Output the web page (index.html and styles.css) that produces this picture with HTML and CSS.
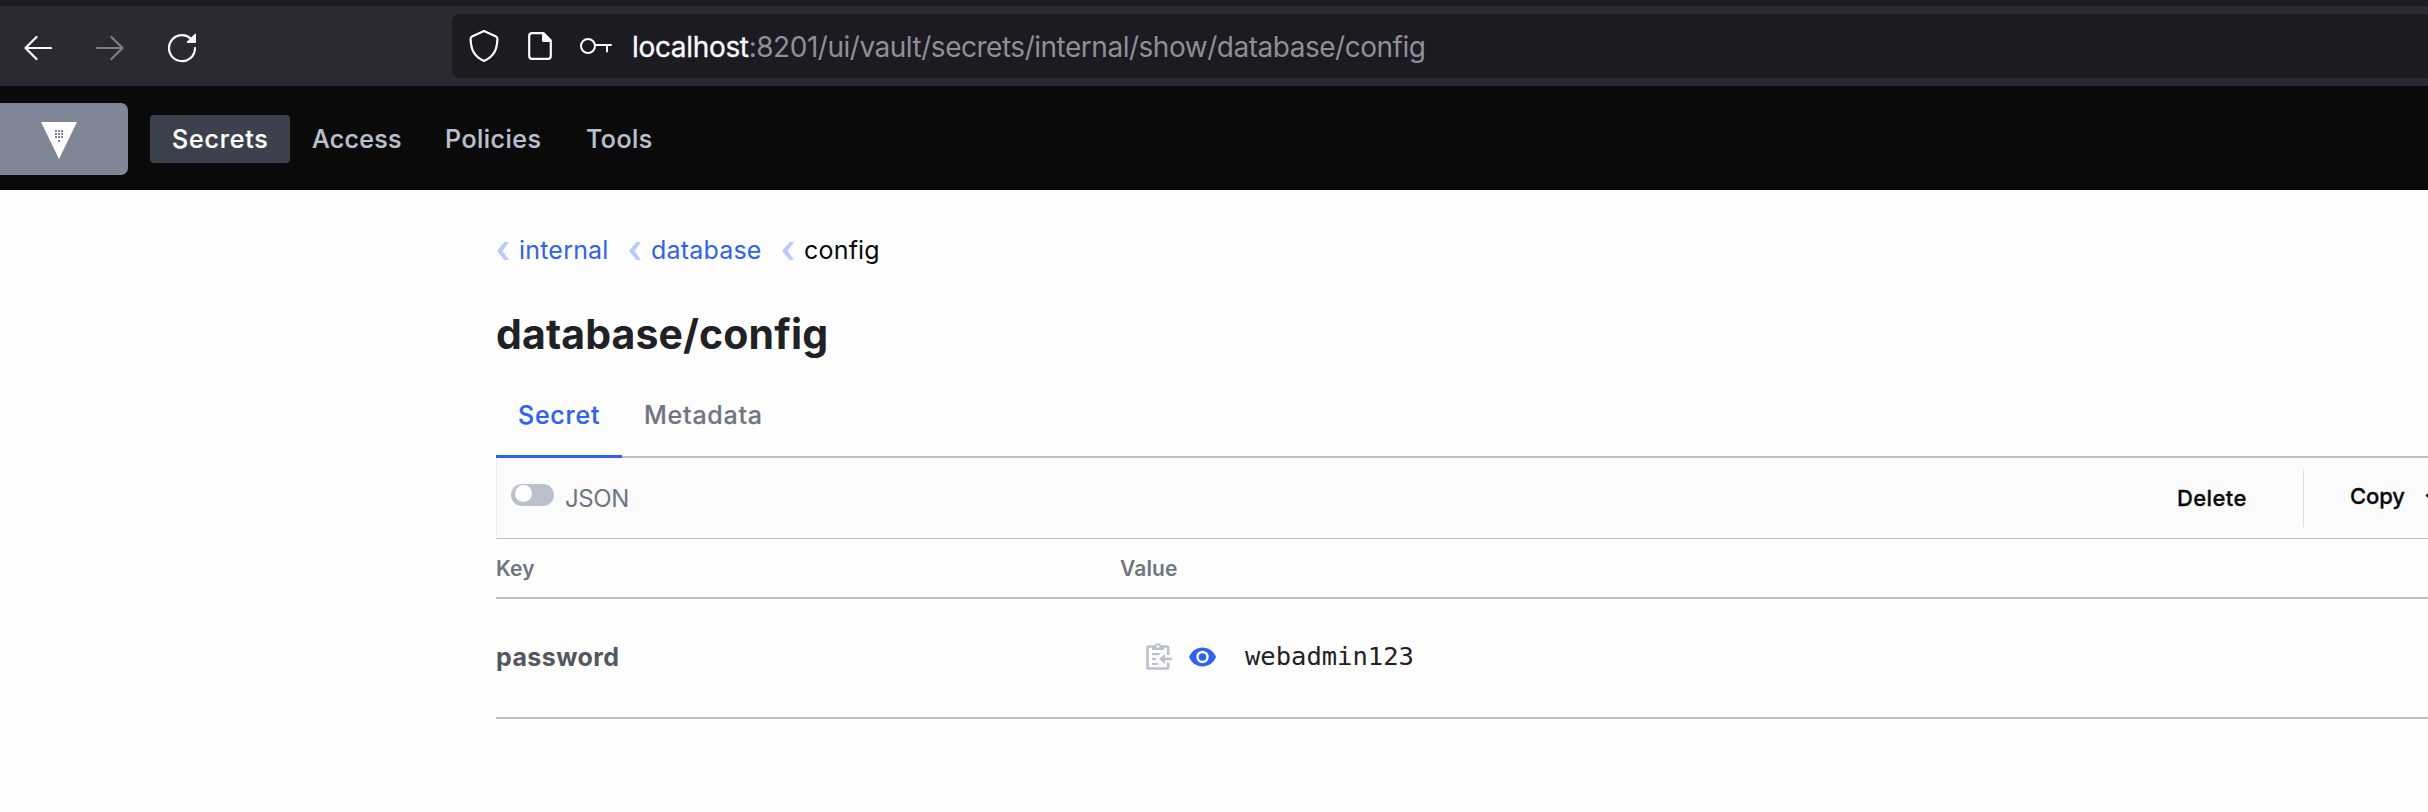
FILE: index.html
```html
<!DOCTYPE html>
<html lang="en">
<head>
<meta charset="utf-8">
<title>Vault</title>
<link rel="stylesheet" href="styles.css">
</head>
<body>
<div class="tabstrip"></div>
<div class="toolbar">
  <svg class="back" width="28" height="26" viewBox="0 0 28 26" fill="none" stroke="#fbfbfe" stroke-width="2.2" stroke-linecap="round" stroke-linejoin="round"><path d="M27 13H1.5M12.5 2L1.5 13L12.5 24"/></svg>
  <svg class="forward" width="28" height="26" viewBox="0 0 28 26" fill="none" stroke="#7e7d83" stroke-width="2.2" stroke-linecap="round" stroke-linejoin="round"><path d="M1 13H26.500M15.500 2L26.500 13L15.500 24"/></svg>
  <svg class="reload" width="29" height="30" viewBox="0 0 29 30" fill="none"><path d="M27 15A13 13 0 1 1 22.500 5.300" stroke="#fbfbfe" stroke-width="2.200" stroke-linecap="round"/><path d="M28 1V9.200Q28 10 27.200 10H19.500Q18 9.700 19 8.500L26.500 1.200Q28 0 28 1Z" fill="#fbfbfe"/></svg>
  <div class="urlbar">
    <svg class="shield" width="30" height="34" viewBox="0 0 30 34" fill="none" stroke="#fbfbfe" stroke-width="2.200" stroke-linejoin="round"><path d="M15 2L27 7.500Q28.500 8.200 28.400 10C28 20 25.500 27.500 15 32C4.500 27.500 2 20 1.600 10Q1.500 8.200 3 7.500Z"/></svg>
    <svg class="page" width="24" height="28" viewBox="0 0 24 28" fill="none"><path d="M4 1.200H15.500L22.800 8.500V24Q22.800 26.800 20 26.800H4Q1.200 26.800 1.200 24V4Q1.200 1.200 4 1.200Z" stroke="#fbfbfe" stroke-width="2.200"/><path d="M14 1H16L23 8V10H15.500Q14 10 14 8.500Z" fill="#fbfbfe"/></svg>
    <svg class="key" width="32" height="16" viewBox="0 0 32 16" fill="none" stroke="#fbfbfe" stroke-width="2"><circle cx="8" cy="8" r="7"/><path d="M15 7H31M27 7V13.500" stroke-linecap="round"/></svg>
    <span class="host">localhost</span><span class="path">:8201/ui/vault/secrets/internal/show/database/config</span>
  </div>
</div>

<header class="nav">
  <a class="logo">
    <svg width="36" height="37" viewBox="0 0 36 37"><path d="M0 0H36L18 37Z" fill="#fff"/><g fill="#7f8796"><path d="M14 8h2v2h-2zM17 8h2v2h-2zM20 8h2v2h-2zM14 11h2v2h-2zM17 11h2v2h-2zM20 11h2v2h-2zM14 14h2v2h-2zM17 14h2v2h-2zM20 14h2v2h-2zM17 18h2v2h-2z"/></g></svg>
  </a>
  <a class="navlink active">Secrets</a>
  <a class="navlink access">Access</a>
  <a class="navlink policies">Policies</a>
  <a class="navlink tools">Tools</a>
</header>

<main class="content">
  <nav class="crumbs">
    <svg class="chev" width="12" height="18" viewBox="0 0 12 18"><path d="M7.500 0H12L5.500 9L12 18H7.500L.8 10Q0 9 .8 8Z"/></svg><a class="crumb internal">internal</a>
    <svg class="chev" width="12" height="18" viewBox="0 0 12 18"><path d="M7.500 0H12L5.500 9L12 18H7.500L.8 10Q0 9 .8 8Z"/></svg><a class="crumb database">database</a>
    <svg class="chev" width="12" height="18" viewBox="0 0 12 18"><path d="M7.500 0H12L5.500 9L12 18H7.500L.8 10Q0 9 .8 8Z"/></svg><span class="crumb current">config</span>
  </nav>
  <h1 class="title">database/config</h1>
  <div class="tabs">
    <a class="tab selected">Secret</a>
    <a class="tab">Metadata</a>
  </div>
  <div class="actions">
    <span class="switch"></span>
    <span class="json">JSON</span>
    <span class="delete">Delete</span>
    <span class="divider"></span>
    <span class="copy">Copy</span>
    <svg class="caret" width="14" height="10" viewBox="0 0 14 10" fill="none" stroke="#0a0a0a" stroke-width="3"><path d="M1.500 1.500L7 7L12.500 1.500"/></svg>
  </div>
  <div class="row head"><span class="keycol">Key</span><span>Value</span></div>
  <div class="row item">
    <span class="keycol">password</span>
    <svg class="clip" width="27" height="28" viewBox="0 0 27 28" fill="none"><path d="M22.200 12V4.700Q22.200 3.500 21 3.500H2.700Q1.500 3.500 1.500 4.700V24.300Q1.500 25.500 2.700 25.500H21Q22.200 25.500 22.200 24.300V19.500" stroke="#bac1cc" stroke-width="2.600"/><path d="M6 7V3.500H8.500Q9 .2 12 .2T15.500 3.500H18V7Z" fill="#bac1cc"/><circle cx="12" cy="3.600" r="1.400" fill="#fff"/><path d="M6 11.200H13.500M6 16H10M6 21H12" stroke="#bac1cc" stroke-width="2.200"/><path d="M18 16H26" stroke="#bac1cc" stroke-width="2.600"/><path d="M19 11V21L13 16Z" fill="#bac1cc"/></svg>
    <svg class="eye" width="27" height="20" viewBox="0 0 27 20"><path d="M13.500 .5C7.500 .5 2.500 4.200 0 10C2.500 15.800 7.500 19.500 13.500 19.500S24.500 15.800 27 10C24.500 4.200 19.500 .5 13.500 .5Z" fill="#2e62f6"/><circle cx="13.500" cy="10" r="6.200" fill="#fff"/><circle cx="13.500" cy="10" r="3.800" fill="#2e62f6"/></svg>
    <code class="value">webadmin123</code>
  </div>
</main>
</body>
</html>
```
FILE: styles.css
```css
* { box-sizing: border-box; }
body {
  margin: 0;
  background: #fefefe;
  font-family: Inter, "Liberation Sans", sans-serif;
  font-size: 25px;
  line-height: 30px;
  overflow: hidden;
}
svg { display: block; flex: none; }

/* Browser chrome */
.tabstrip { height: 6px; background: #1c1b22; }
.toolbar {
  display: flex;
  align-items: center;
  height: 80px;
  padding-left: 24px;
  background: #2b2a33;
}
.back, .forward { margin-top: 3px; }
.forward { margin-left: 44px; }
.reload { margin: 3px 0 0 44px; }
.urlbar {
  display: flex;
  align-items: center;
  flex: 1;
  height: 64px;
  margin-left: 255px;
  padding-left: 17px;
  border-radius: 8px 0 0 8px;
  background: #1c1b22;
  font-size: 28px;
  line-height: 36px;
  white-space: nowrap;
}
.page { margin-left: 29px; }
.key { margin-left: 28px; }
.host {
  margin: 1px 0 0 20px;
  color: #fbfbfe;
  -webkit-text-stroke: .3px #fbfbfe;
  letter-spacing: -.33px;
}
.path { margin-top: 1px; color: #8f8f94; letter-spacing: -.48px; }

/* Vault navigation */
.nav {
  display: flex;
  align-items: center;
  height: 104px;
  background: #0a0a0a;
  color: #bac1cc;
  font-weight: 500;
}
.logo {
  width: 128px;
  height: 72px;
  margin: 2px 22px 0 0;
  padding: 19px 0 0 41px;
  border-radius: 0 7px 7px 0;
  background: #7f8796;
}
.navlink {
  margin-top: 2px;
  padding: 9px 22px;
  letter-spacing: .5px;
  -webkit-text-stroke: .2px;
}
.navlink.active {
  width: 140px;
  border-radius: 4px;
  background: #3d414b;
  color: #fff;
  letter-spacing: .8px;
}
.access { width: 133px; letter-spacing: .3px; }
.policies { width: 141px; }

/* Secret page */
.content { padding: 45px 0 0 496px; }
.crumbs {
  display: flex;
  align-items: center;
  height: 30px;
  letter-spacing: .2px;
}
.chev { margin: 2px 0 0 1px; fill: #b9cbfc; }
.crumb { margin-left: 10px; color: #2e62f6; }
.crumb.internal { width: 109px; }
.crumb.database { width: 130px; }
.crumb.current { color: #0a0a0a; }
.title {
  margin: 44px 0 0;
  font-size: 41px;
  line-height: 50px;
  font-weight: 700;
  letter-spacing: .12px;
  color: #1f2124;
}
.tabs {
  display: flex;
  height: 99px;
  border-bottom: 2px solid #bac1cc;
  color: #6f7682;
  font-weight: 500;
  letter-spacing: .75px;
  -webkit-text-stroke: .2px;
}
.tab { height: 99px; padding: 41px 22px 0; }
.tab.selected {
  width: 126px;
  border-bottom: 3px solid #2e62f6;
  color: #2e62f6;
}
.actions {
  display: flex;
  align-items: center;
  height: 81px;
  padding-left: 14px;
  border-left: 1px solid #e8ebf0;
  border-bottom: 1px solid #bac1cc;
  background: #fbfbfc;
  color: #0a0a0a;
  font-size: 22px;
  font-weight: 500;
}
.actions > * { flex: none; }
.switch {
  width: 43px;
  height: 22px;
  margin-top: -6px;
  padding: 1px 4px;
  border-radius: 11px;
  background: #bac1cc;
}
.switch::before {
  content: "";
  display: block;
  width: 17px;
  height: 17px;
  border-radius: 50%;
  background: #fff;
}
.json {
  width: 1612px;
  margin: 2px 0 0 11px;
  color: #6f7682;
  font-size: 24px;
  font-weight: 400;
  letter-spacing: -.4px;
}
.delete {
  width: 126px;
  margin-top: -1px;
  letter-spacing: .4px;
  -webkit-text-stroke: .3px;
}
.divider { width: 1px; height: 58px; background: #dce0e6; }
.copy {
  width: 75px;
  margin: -5px 0 0 46px;
  letter-spacing: -.1px;
  -webkit-text-stroke: .3px;
}
.caret { margin-top: -1px; }
.row { display: flex; align-items: center; border-bottom: 2px solid #bac1cc; }
.keycol { width: 624px; }
.head {
  height: 60px;
  padding-top: 2px;
  color: #6f7682;
  font-size: 21px;
  font-weight: 600;
  letter-spacing: .15px;
}
.item { height: 120px; }
.item .keycol {
  width: 650px;
  margin-top: -3px;
  color: #525761;
  font-weight: 700;
  letter-spacing: .42px;
}
.clip { margin-top: -3px; }
.eye { margin: -3px 0 0 16px; }
.value {
  margin: -4px 0 0 29px;
  color: #1f2124;
  font-family: "DejaVu Sans Mono", monospace;
  font-size: 25.5px;
}
```
